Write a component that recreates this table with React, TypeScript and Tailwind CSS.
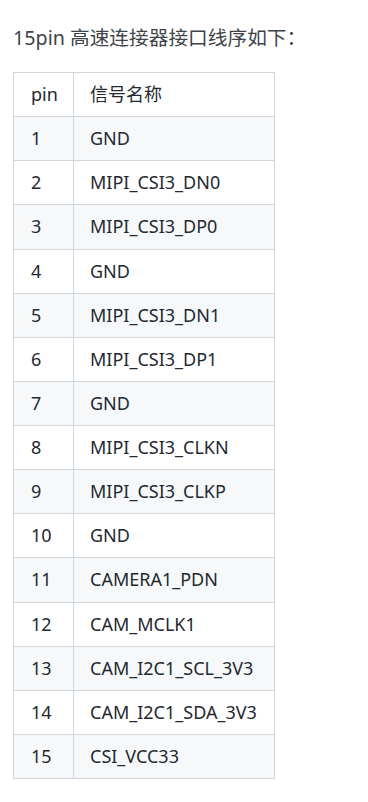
import React from "react";

const rows: [string, string][] = [
  ["1", "GND"],
  ["2", "MIPI_CSI3_DN0"],
  ["3", "MIPI_CSI3_DP0"],
  ["4", "GND"],
  ["5", "MIPI_CSI3_DN1"],
  ["6", "MIPI_CSI3_DP1"],
  ["7", "GND"],
  ["8", "MIPI_CSI3_CLKN"],
  ["9", "MIPI_CSI3_CLKP"],
  ["10", "GND"],
  ["11", "CAMERA1_PDN"],
  ["12", "CAM_MCLK1"],
  ["13", "CAM_I2C1_SCL_3V3"],
  ["14", "CAM_I2C1_SDA_3V3"],
  ["15", "CSI_VCC33"],
];

const App = () => {
  return (
    <div
      className="min-h-screen bg-white px-[13px] pt-[23px] text-[18px] text-[#24292f]"
      style={{ fontFamily: '"Noto Sans", "Noto Sans CJK SC", sans-serif' }}
    >
      {/* Intro line */}
      <p className="text-[19.7px] leading-[30px] text-[#404448]">15pin 高速连接器接口线序如下：</p>

      {/* Pin table */}
      <table className="mt-[19px] border-collapse">
        <thead>
          <tr className="h-[44.13px] bg-white">
            <th className="w-[60px] border border-[#d0d7de] pl-[17px] text-left font-normal">
              pin
            </th>
            <th className="w-[201px] border border-[#d0d7de] pl-[16px] text-left font-normal">
              信号名称
            </th>
          </tr>
        </thead>
        <tbody>
          {rows.map(([pin, name], i) => (
            <tr
              key={pin}
              className={i % 2 === 0 ? "h-[44.13px] bg-[#f6f8fa]" : "h-[44.13px] bg-white"}
            >
              <td className="border border-[#d0d7de] pl-[17px]">{pin}</td>
              <td className="border border-[#d0d7de] pl-[16px]">{name}</td>
            </tr>
          ))}
        </tbody>
      </table>
    </div>
  );
};

export default App;
